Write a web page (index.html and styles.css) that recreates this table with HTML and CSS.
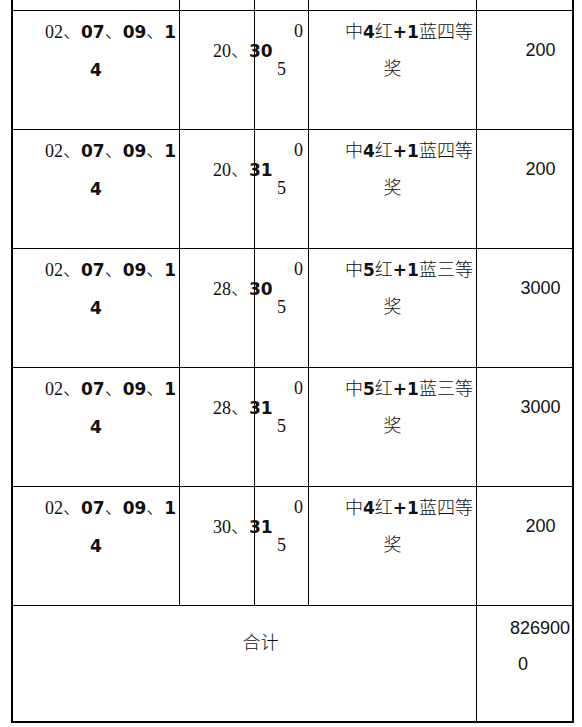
FILE: index.html
```html
<!DOCTYPE html>
<html lang="zh-CN">
<head>
<meta charset="utf-8">
<title>中奖明细</title>
<link rel="stylesheet" href="styles.css">
</head>
<body>
<div class="table">
  <div class="row top">
    <div class="c"></div><div class="c"></div><div class="c"></div><div class="c"></div><div class="c"></div>
  </div>

  <div class="row">
    <div class="c c1"><div class="l1"><span class="sf">02</span>、<b>07</b>、<b>09</b>、<b>1</b></div><div class="l2"><b>4</b></div></div>
    <div class="c c2"><span class="sf">20</span>、<b>30</b></div>
    <div class="c c3"><div class="l1">0</div><div class="l2">5</div></div>
    <div class="c c4"><div class="l1">中<b>4</b>红<b>+1</b>蓝四等</div><div class="l2">奖</div></div>
    <div class="c c5">200</div>
  </div>

  <div class="row">
    <div class="c c1"><div class="l1"><span class="sf">02</span>、<b>07</b>、<b>09</b>、<b>1</b></div><div class="l2"><b>4</b></div></div>
    <div class="c c2"><span class="sf">20</span>、<b>31</b></div>
    <div class="c c3"><div class="l1">0</div><div class="l2">5</div></div>
    <div class="c c4"><div class="l1">中<b>4</b>红<b>+1</b>蓝四等</div><div class="l2">奖</div></div>
    <div class="c c5">200</div>
  </div>

  <div class="row">
    <div class="c c1"><div class="l1"><span class="sf">02</span>、<b>07</b>、<b>09</b>、<b>1</b></div><div class="l2"><b>4</b></div></div>
    <div class="c c2"><span class="sf">28</span>、<b>30</b></div>
    <div class="c c3"><div class="l1">0</div><div class="l2">5</div></div>
    <div class="c c4"><div class="l1">中<b>5</b>红<b>+1</b>蓝三等</div><div class="l2">奖</div></div>
    <div class="c c5">3000</div>
  </div>

  <div class="row">
    <div class="c c1"><div class="l1"><span class="sf">02</span>、<b>07</b>、<b>09</b>、<b>1</b></div><div class="l2"><b>4</b></div></div>
    <div class="c c2"><span class="sf">28</span>、<b>31</b></div>
    <div class="c c3"><div class="l1">0</div><div class="l2">5</div></div>
    <div class="c c4"><div class="l1">中<b>5</b>红<b>+1</b>蓝三等</div><div class="l2">奖</div></div>
    <div class="c c5">3000</div>
  </div>

  <div class="row">
    <div class="c c1"><div class="l1"><span class="sf">02</span>、<b>07</b>、<b>09</b>、<b>1</b></div><div class="l2"><b>4</b></div></div>
    <div class="c c2"><span class="sf">30</span>、<b>31</b></div>
    <div class="c c3"><div class="l1">0</div><div class="l2">5</div></div>
    <div class="c c4"><div class="l1">中<b>4</b>红<b>+1</b>蓝四等</div><div class="l2">奖</div></div>
    <div class="c c5">200</div>
  </div>

  <div class="row total">
    <div class="c ct">合计</div>
    <div class="c c5 sum"><div class="l1">826900</div><div class="l2">0</div></div>
  </div>
</div>
</body>
</html>
```

FILE: styles.css
```css
html, body {
  margin: 0;
  padding: 0;
  background: #fff;
}

body {
  font-family: "Noto Sans CJK SC", sans-serif;
  font-size: 18px;
  color: #111;
  overflow: hidden;
}

.table {
  box-sizing: border-box;
  margin-left: 11px;
  width: 563px;
  border-left: 2px solid #000;
  border-right: 2px solid #000;
  border-bottom: 2px solid #000;
}

.row {
  display: grid;
  grid-template-columns: 167px 75px 54px 168px 95px;
  box-sizing: border-box;
  height: 119px;
  border-bottom: 1px solid #000;
}

.row.top {
  height: 11px;
}

.row.total {
  grid-template-columns: 464px 95px;
  height: 115px;
  border-bottom: none;
}

.c {
  box-sizing: border-box;
  border-right: 1px solid #000;
  min-width: 0;
  white-space: nowrap;
  font-weight: 300;
}

.c:last-child {
  border-right: none;
}

b {
  font-family: "DejaVu Sans", "Noto Sans CJK SC", sans-serif;
  font-size: 17px;
  font-weight: 700;
}

.sf {
  font-family: "Liberation Serif", serif;
  font-weight: 400;
}

.l1, .l2 {
  height: 38px;
  line-height: 38px;
}

.c1 {
  padding-top: 0;
}
.c1 .l1 {
  padding-left: 32px;
}
.c1 .l2 {
  text-align: center;
}

.c2 {
  padding-top: 19px;
  padding-left: 33px;
  line-height: 38px;
  position: relative;
  z-index: 1;
}

.c3 {
  padding-top: 1px;
  font-family: "Liberation Serif", serif;
  font-weight: 400;
}
.c3 .l1 {
  text-align: right;
  padding-right: 5px;
}
.c3 .l2 {
  text-align: center;
}

.c4 {
  padding-top: 0;
}
.c4 .l1 {
  padding-left: 36px;
  height: 37px;
}
.c4 .l2 {
  text-align: center;
}

.c5 {
  padding-top: 20px;
  padding-left: 32px;
  line-height: 38px;
  text-align: center;
  font-family: "Liberation Sans", sans-serif;
  font-weight: 400;
}

.c5.sum {
  padding-top: 3px;
  padding-left: 0;
  text-align: left;
}
.sum .l1 {
  padding-left: 33px;
  height: 36px;
}
.sum .l2 {
  padding-left: 41px;
}

.ct {
  padding-top: 16px;
  padding-left: 32px;
  text-align: center;
  line-height: 38px;
}
```
